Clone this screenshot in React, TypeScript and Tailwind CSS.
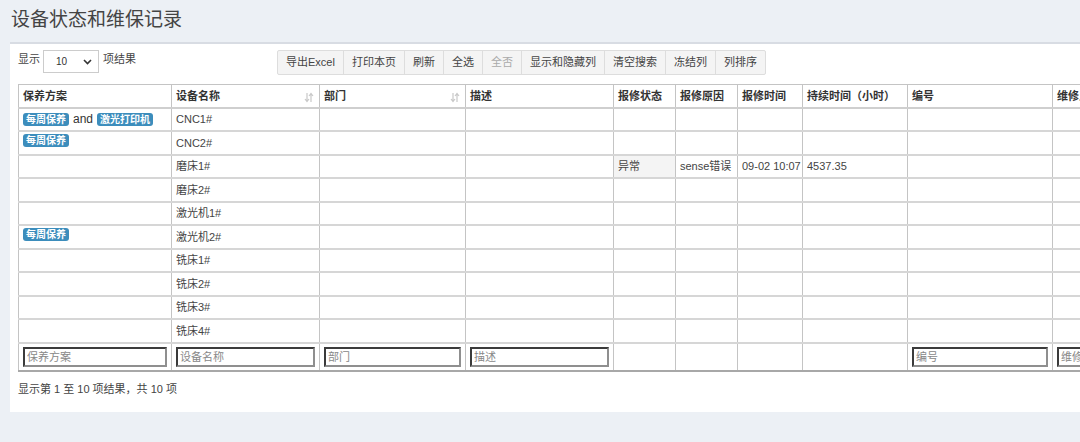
import React from "react";

const FONT = { fontFamily: '"Liberation Sans", "Noto Sans CJK SC", sans-serif' };

const cols = [
  { name: "保养方案", w: 153, input: true },
  { name: "设备名称", w: 148, input: true, sort: true },
  { name: "部门", w: 146, input: true, sort: true },
  { name: "描述", w: 148, input: true },
  { name: "报修状态", w: 62 },
  { name: "报修原因", w: 62 },
  { name: "报修时间", w: 65 },
  { name: "持续时间（小时）", w: 105 },
  { name: "编号", w: 145, input: true },
  { name: "维修人员", w: 146, input: true },
];

const devices = ["CNC1#", "CNC2#", "磨床1#", "磨床2#", "激光机1#", "激光机2#", "铣床1#", "铣床2#", "铣床3#", "铣床4#"];

function Badge({ children }: { children: React.ReactNode }) {
  return (
    <span className="inline-block h-[13px] leading-[13px] px-[3px] rounded-[3px] bg-[#3c8dbc] text-white text-[10px] font-bold align-middle">
      {children}
    </span>
  );
}

function SortIcon() {
  return (
    <svg width="10" height="11" viewBox="0 0 10 11" className="absolute right-[5px] top-[7px]">
      <path d="M3 1v8M1 7l2 2.5L5 7" stroke="#c8c8c8" strokeWidth="1.2" fill="none" />
      <path d="M7 10V2M5 4l2-2.5L9 4" stroke="#c8c8c8" strokeWidth="1.2" fill="none" />
    </svg>
  );
}

const buttons = ["导出Excel", "打印本页", "刷新", "全选", "全否", "显示和隐藏列", "清空搜索", "冻结列", "列排序"];

const cell = "border border-[#c4c4c4] border-b-2 border-b-[#d6d6d6]";

export default function App() {
  return (
    <div className="w-[1080px] h-[442px] bg-[#ecf0f5] overflow-hidden text-[11px] text-[#333]" style={FONT}>
      <div className="h-[42px] pl-[11px] pt-[7px] text-[19px] leading-[26px] text-[#444]">设备状态和维保记录</div>
      <div className="ml-[10px] w-[1100px] h-[370px] bg-white border-t-2 border-[#d8dce3] overflow-hidden">
        <div className="flex items-start pl-[8px] pt-[6px] h-[40px]">
          <div className="w-[259px] flex items-center h-[23px] text-[#444]">
            <span className="-mt-[4px]">显示</span>
            <div className="ml-[3px] w-[56px] h-[23px] border border-[#ccc] flex items-center pl-[12px] pr-[6px] justify-between text-[10px] text-[#333]">
              <span>10</span>
              <svg width="9" height="6" viewBox="0 0 9 6"><path d="M1 1l3.5 3.5L8 1" stroke="#333" strokeWidth="1.6" fill="none" /></svg>
            </div>
            <span className="ml-[4px] -mt-[4px]">项结果</span>
          </div>
          <div className="flex h-[25px] border border-[#ddd] rounded-[2px] bg-[#f4f4f4]">
            {buttons.map((b, i) => (
              <div
                key={b}
                className={
                  "px-[8px] flex items-center h-full " +
                  (i > 0 ? "border-l border-[#ddd] " : "") +
                  (b === "全否" ? "text-[#aaa]" : "text-[#444]")
                }
              >
                {b}
              </div>
            ))}
          </div>
        </div>
        <table className="ml-[8px] table-fixed border-collapse border border-[#a8a8a8]" style={{ width: 1180 }}>
          <colgroup>
            {cols.map((c) => (
              <col key={c.name} style={{ width: c.w }} />
            ))}
          </colgroup>
          <thead>
            <tr className="h-[23px]">
              {cols.map((c) => (
                <th key={c.name} className="relative border border-[#c4c4c4] border-b-2 border-b-[#cfcfcf] text-left font-bold pl-[4px] whitespace-nowrap overflow-hidden text-[#333]">
                  {c.name}
                  {c.sort && <SortIcon />}
                </th>
              ))}
            </tr>
          </thead>
          <tbody>
            {devices.map((d, r) => (
              <tr key={d} className="h-[23.5px]">
                <td className={cell + " pl-[4px] whitespace-nowrap"}>
                  {r === 0 && (
                    <span className="flex items-center gap-[4px]">
                      <Badge>每周保养</Badge>
                      <span className="text-[#333] text-[12px]">and</span>
                      <Badge>激光打印机</Badge>
                    </span>
                  )}
                  {(r === 1 || r === 5) && (
                    <span className="flex items-center -mt-[4px]">
                      <Badge>每周保养</Badge>
                    </span>
                  )}
                </td>
                <td className={cell + " pl-[4px] text-[#444]"}>{d}</td>
                <td className={cell}></td>
                <td className={cell}></td>
                <td className={cell + " pl-[4px] text-[#444] " + (r === 2 ? "bg-[#f4f4f4]" : "")}>{r === 2 ? "异常" : ""}</td>
                <td className={cell + " pl-[4px] text-[#444] whitespace-nowrap overflow-hidden"}>{r === 2 ? "sense错误" : ""}</td>
                <td className={cell + " pl-[4px] text-[#444] whitespace-nowrap overflow-hidden"}>{r === 2 ? "09-02 10:07" : ""}</td>
                <td className={cell + " pl-[4px] text-[#444]"}>{r === 2 ? "4537.35" : ""}</td>
                <td className={cell}></td>
                <td className={cell}></td>
              </tr>
            ))}
          </tbody>
          <tfoot>
            <tr className="h-[28px]">
              {cols.map((c) => (
                <td key={c.name} className="border border-[#c4c4c4] border-t-2 border-t-[#bdbdbd] border-b-2 border-b-[#a8a8a8] px-[4px]">
                  {c.input && (
                    <input
                      readOnly
                      placeholder={c.name}
                      className="block w-full h-[20px] border-2 [border-style:inset] border-[#8f8f8f] px-[2px] text-[11px] placeholder:text-[#888] outline-none"
                      style={FONT}
                    />
                  )}
                </td>
              ))}
            </tr>
          </tfoot>
        </table>
        <div className="pl-[8px] mt-[9px] text-[#444]">显示第 1 至 10 项结果，共 10 项</div>
      </div>
    </div>
  );
}
